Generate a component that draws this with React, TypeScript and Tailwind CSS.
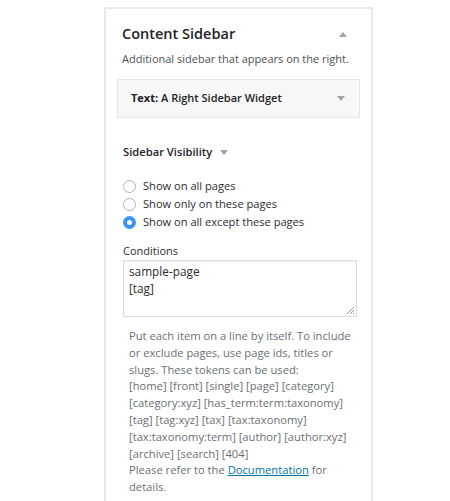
import React from 'react';

const font = { fontFamily: '"Open Sans", "Noto Sans", sans-serif' };

const Radio: React.FC<{ checked?: boolean; label: string }> = ({ checked, label }) => (
  <label className="flex items-center h-[18px]">
    {checked ? (
      <span className="w-[13px] h-[13px] rounded-full bg-[#3a95f7] flex items-center justify-center">
        <span className="w-[5px] h-[5px] rounded-full bg-white" />
      </span>
    ) : (
      <span className="w-[13px] h-[13px] rounded-full border border-[#b4b4b4] bg-white" />
    )}
    <span className="ml-[7px] text-[11.1px] text-[#2c2c2c]">{label}</span>
  </label>
);

const helpLines = [
  'Put each item on a line by itself. To include',
  'or exclude pages, use page ids, titles or',
  'slugs. These tokens can be used:',
  '[home] [front] [single] [page] [category]',
  '[category:xyz] [has_term:term:taxonomy]',
  '[tag] [tag:xyz] [tax] [tax:taxonomy]',
  '[tax:taxonomy:term] [author] [author:xyz]',
  '[archive] [search] [404]',
];

export default function App() {
  return (
    <div className="w-[450px] h-[501px] bg-white overflow-hidden" style={font}>
      <div className="ml-[104px] mt-[7px] w-[269px] h-[520px] border-2 border-[#e8e8e8] bg-white">
        <div className="px-[16px] pt-[15px]">
          <div className="flex items-center justify-between h-[20px]">
            <h2 className="text-[14.5px] font-semibold text-[#1e2226]">Content Sidebar</h2>
            <span className="mr-[8px] w-0 h-0 border-l-[4px] border-r-[4px] border-b-[5px] border-l-transparent border-r-transparent border-b-[#a0a5aa]" />
          </div>
          <p className="mt-[6px] h-[18px] leading-[18px] text-[11px] text-[#4f4f4f]">Additional sidebar that appears on the right.</p>
        </div>

        <div className="mx-[11px] mt-[11px] h-[39px] border border-[#e5e5e5] bg-[#f7f7f7] flex items-center justify-between pl-[13px] pr-[14px]">
          <span className="text-[11px] font-semibold text-[#1e2226]">
            <b className="font-bold">Text:</b> A Right Sidebar Widget
          </span>
          <span className="w-0 h-0 border-l-[4px] border-r-[4px] border-t-[5px] border-l-transparent border-r-transparent border-t-[#a0a5aa]" />
        </div>

        <div className="px-[17px] mt-[25px]">
          <div className="flex items-center h-[18px]">
            <span className="text-[11.2px] font-semibold text-[#1e2226]">Sidebar Visibility</span>
            <span className="ml-[8px] mt-[1px] w-0 h-0 border-l-[4px] border-r-[4px] border-t-[5px] border-l-transparent border-r-transparent border-t-[#a0a5aa]" />
          </div>

          <div className="mt-[16px] flex flex-col">
            <Radio label="Show on all pages" />
            <Radio label="Show only on these pages" />
            <Radio checked label="Show on all except these pages" />
          </div>

          <div className="mt-[11px] h-[18px] leading-[18px] text-[11px] text-[#2c2c2c]">Conditions</div>
          <div className="relative w-[234px] h-[57px] border border-[#ddd] px-[5px] pt-[2px] text-[11.8px] leading-[17px] text-[#2c2c2c] shadow-[inset_0_1px_2px_rgba(0,0,0,0.07)]">
            <div>sample-page</div>
            <div>[tag]</div>
            <svg className="absolute right-[1px] bottom-[1px]" width="9" height="9" viewBox="0 0 9 9">
              <path d="M8 1L1 8M8 4L4 8M8 7L7 8" stroke="#999" strokeWidth="1" />
            </svg>
          </div>

          <div className="mt-[11px] pl-[6px] text-[11.2px] leading-[16.8px] text-[#6b6f73] whitespace-nowrap">
            {helpLines.map((l) => (
              <div key={l}>{l}</div>
            ))}
            <div>
              Please refer to the <a className="text-[#0073aa] underline" href="#">Documentation</a> for
            </div>
            <div>details.</div>
          </div>
        </div>
      </div>
    </div>
  );
}
